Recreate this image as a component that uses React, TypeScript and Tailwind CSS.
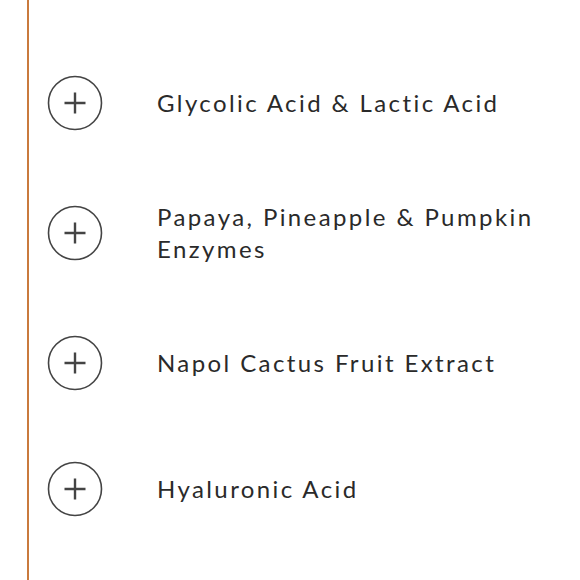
const ingredients = [
  'Glycolic Acid & Lactic Acid',
  'Papaya, Pineapple & Pumpkin Enzymes',
  'Napol Cactus Fruit Extract',
  'Hyaluronic Acid',
]

function PlusCircle() {
  return (
    <svg width="56" height="56" viewBox="0 0 56 56" className="flex-shrink-0">
      <circle cx="28" cy="28" r="26.5" fill="none" stroke="#444" strokeWidth="1.6" />
      <path d="M28 17.5v21M17.5 28h21" stroke="#444" strokeWidth="2.4" strokeLinecap="butt" />
    </svg>
  )
}

export default function App() {
  return (
    <div className="w-[580px] h-[580px] bg-white overflow-hidden flex" style={{ fontFamily: 'Lato, "Open Sans", sans-serif' }}>
      <div className="ml-[27px] w-[2px] bg-[#c97a3e] flex-shrink-0" />
      <div className="flex flex-col pl-[18px] pt-[75px] gap-[70px]">
        {ingredients.map((name) => (
          <div key={name} className="flex items-center gap-[54px]">
            <PlusCircle />
            <span className="text-[24px] leading-[32px] tracking-[0.1em] text-[#2a2a2a] max-w-[390px]">{name}</span>
          </div>
        ))}
      </div>
    </div>
  )
}
